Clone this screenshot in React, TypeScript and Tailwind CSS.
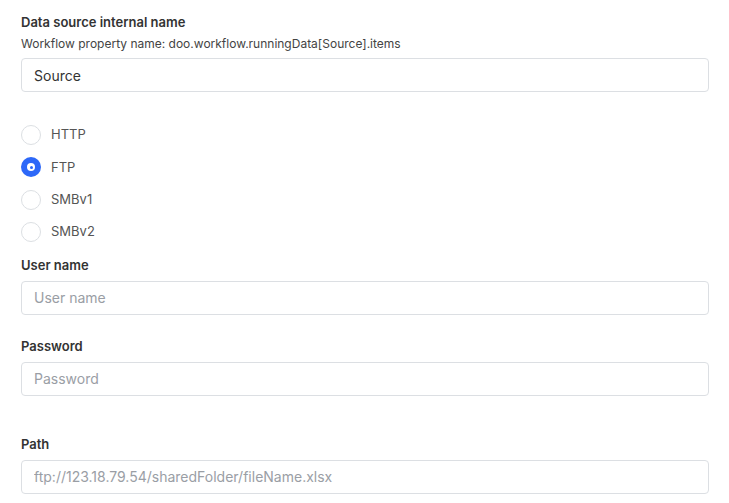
import { useState } from 'react';

const protocols = ['HTTP', 'FTP', 'SMBv1', 'SMBv2'];

function Field({ label, placeholder, className = '' }: { label: string; placeholder: string; className?: string }) {
    return (
        <div className={className}>
            <label className="block text-[13px] font-semibold leading-5 text-[#333]">{label}</label>
            <input
                placeholder={placeholder}
                className="mt-1.5 block h-[34px] w-full rounded-[4px] border border-[#dcdfe3] bg-white px-3 text-[14px] text-[#333] outline-none placeholder:text-[#9a9ea5]"
            />
        </div>
    );
}

export default function App() {
    const [protocol, setProtocol] = useState('FTP');

    return (
        <div className="min-h-screen bg-white px-[21px] pt-3 font-['Inter',sans-serif]">
            <div className="w-[688px]">
                <label className="block text-[13px] font-semibold leading-5 text-[#333]">
                    Data source internal name
                </label>
                <p className="mt-1 text-[12px] leading-4 text-[#444]">
                    Workflow property name: doo.workflow.runningData[Source].items
                </p>
                <input
                    defaultValue="Source"
                    className="mt-1.5 block h-[34px] w-full rounded-[4px] border border-[#dcdfe3] bg-white px-3 text-[14px] text-[#333] outline-none"
                />

                <div className="mt-[33px] flex flex-col gap-[12.3px]">
                    {protocols.map((p) => (
                        <label key={p} className="flex h-5 cursor-pointer items-center gap-2.5" onClick={() => setProtocol(p)}>
                            {protocol === p ? (
                                <span className="flex h-5 w-5 items-center justify-center rounded-full bg-[#2d68f8]">
                                    <span className="flex h-[8px] w-[8px] items-center justify-center rounded-full bg-white">
                                        <span className="h-[3px] w-[3px] rounded-full bg-[#2d68f8]" />
                                    </span>
                                </span>
                            ) : (
                                <span className="h-5 w-5 rounded-full border border-[#dcdfe3] bg-white" />
                            )}
                            <span className="text-[13px] text-[#555]">{p}</span>
                        </label>
                    ))}
                </div>

                <Field label="User name" placeholder="User name" className="mt-[13px]" />
                <Field label="Password" placeholder="Password" className="mt-[21px]" />
                <Field label="Path" placeholder="ftp://123.18.79.54/sharedFolder/fileName.xlsx" className="mt-[38px]" />
            </div>
        </div>
    );
}
